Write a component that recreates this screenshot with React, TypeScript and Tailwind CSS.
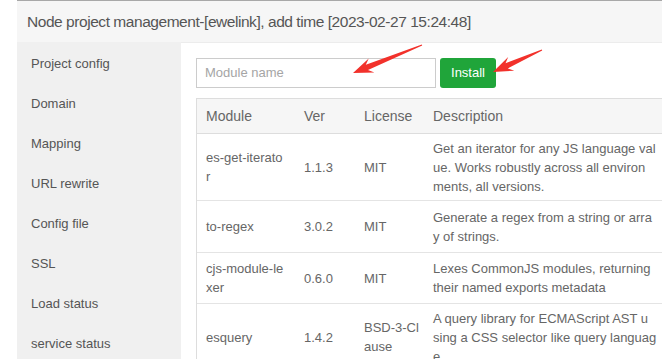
import React from "react";

type Row = { h: number; mod: string[]; ver: string; lic: string[]; desc: string[] };

const rows: Row[] = [
  { h: 67, mod: ["es-get-iterato", "r"], ver: "1.1.3", lic: ["MIT"], desc: ["Get an iterator for any JS language val", "ue. Works robustly across all environ", "ments, all versions."] },
  { h: 52, mod: ["to-regex"], ver: "3.0.2", lic: ["MIT"], desc: ["Generate a regex from a string or arra", "y of strings."] },
  { h: 51, mod: ["cjs-module-le", "xer"], ver: "0.6.0", lic: ["MIT"], desc: ["Lexes CommonJS modules, returning", "their named exports metadata"] },
  { h: 67, mod: ["esquery"], ver: "1.4.2", lic: ["BSD-3-Cl", "ause"], desc: ["A query library for ECMAScript AST u", "sing a CSS selector like query languag", "e."] },
];

const menu = ["Project config", "Domain", "Mapping", "URL rewrite", "Config file", "SSL", "Load status", "service status"];

function arrowPoints(tx: number, ty: number, px: number, py: number) {
  const dx = px - tx;
  const dy = py - ty;
  const len = Math.hypot(dx, dy);
  const ux = dx / len;
  const uy = dy / len;
  const nx = -uy;
  const ny = ux;
  const headLen = 20;
  const headW = 7.5;
  const neckW = 2.8;
  const bx = px - ux * headLen;
  const by = py - uy * headLen;
  const nkx = px - ux * (headLen - 5);
  const nky = py - uy * (headLen - 5);
  const pts = [
    [tx + nx * 0.5, ty + ny * 0.5],
    [nkx + nx * neckW, nky + ny * neckW],
    [bx + nx * headW, by + ny * headW],
    [px, py],
    [bx - nx * headW, by - ny * headW],
    [nkx - nx * neckW, nky - ny * neckW],
    [tx - nx * 0.5, ty - ny * 0.5],
  ];
  return pts.map((p) => p.map((v) => v.toFixed(1)).join(",")).join(" ");
}

export default function App() {
  return (
    <div
      className="relative w-[662px] h-[359px] overflow-hidden bg-white pl-[17px] text-[13px]"
      style={{ fontFamily: '"Liberation Sans", Arial, sans-serif' }}
    >
      <div className="flex flex-col h-full">
        <div className="h-[42px] shrink-0 border-t border-[#a8a8a8] bg-[#f6f6f6] flex items-center pl-[10px] text-[15.5px] text-[#555] tracking-[-0.45px]">
          Node project management-[ewelink], add time [2023-02-27 15:24:48]
        </div>
        <div className="flex flex-1 min-h-0">
          <div className="w-[164px] shrink-0 bg-[#f0f0f0] pt-[2px] text-[#555]">
            {menu.map((m) => (
              <div key={m} className="h-[40px] flex items-center pl-[14px]">
                {m}
              </div>
            ))}
          </div>
          <div className="flex-1 min-w-0 border-t border-[#ececec] pl-[15px] pt-[15px] overflow-hidden">
            <div className="flex items-center">
              <div className="w-[240px] h-[30px] border border-[#ccc] flex items-center pl-[8px] text-[#a5a5a5]">
                Module name
              </div>
              <div className="ml-[4px] w-[56px] h-[30px] rounded-[3px] bg-[#20a53a] text-white flex items-center justify-center">
                Install
              </div>
            </div>
            <div className="mt-[10px] w-[520px] border-l border-t border-[#ddd] text-[#666]">
              <div className="flex h-[35px] items-center bg-[#f6f6f6] border-b border-[#ddd] text-[14px]">
                <div className="w-[98px] pl-[9px]">Module</div>
                <div className="w-[60px] pl-[9px]">Ver</div>
                <div className="w-[69px] pl-[9px]">License</div>
                <div className="flex-1 pl-[9px]">Description</div>
              </div>
              {rows.map((r, i) => (
                <div key={i} className="flex items-center border-b border-[#e4e4e4] leading-[19px]" style={{ height: r.h }}>
                  <div className="w-[98px] pl-[9px]">
                    {r.mod.map((l) => (
                      <div key={l}>{l}</div>
                    ))}
                  </div>
                  <div className="w-[60px] pl-[9px]">{r.ver}</div>
                  <div className="w-[69px] pl-[9px]">
                    {r.lic.map((l) => (
                      <div key={l}>{l}</div>
                    ))}
                  </div>
                  <div className="flex-1 pl-[9px] whitespace-nowrap">
                    {r.desc.map((l) => (
                      <div key={l}>{l}</div>
                    ))}
                  </div>
                </div>
              ))}
            </div>
          </div>
        </div>
      </div>
      <svg className="absolute left-0 top-0 pointer-events-none" width="662" height="359">
        <polygon points={arrowPoints(422, 45, 353, 73)} fill="#f2312b" />
        <polygon points={arrowPoints(542, 50, 493, 72)} fill="#f2312b" />
      </svg>
    </div>
  );
}
